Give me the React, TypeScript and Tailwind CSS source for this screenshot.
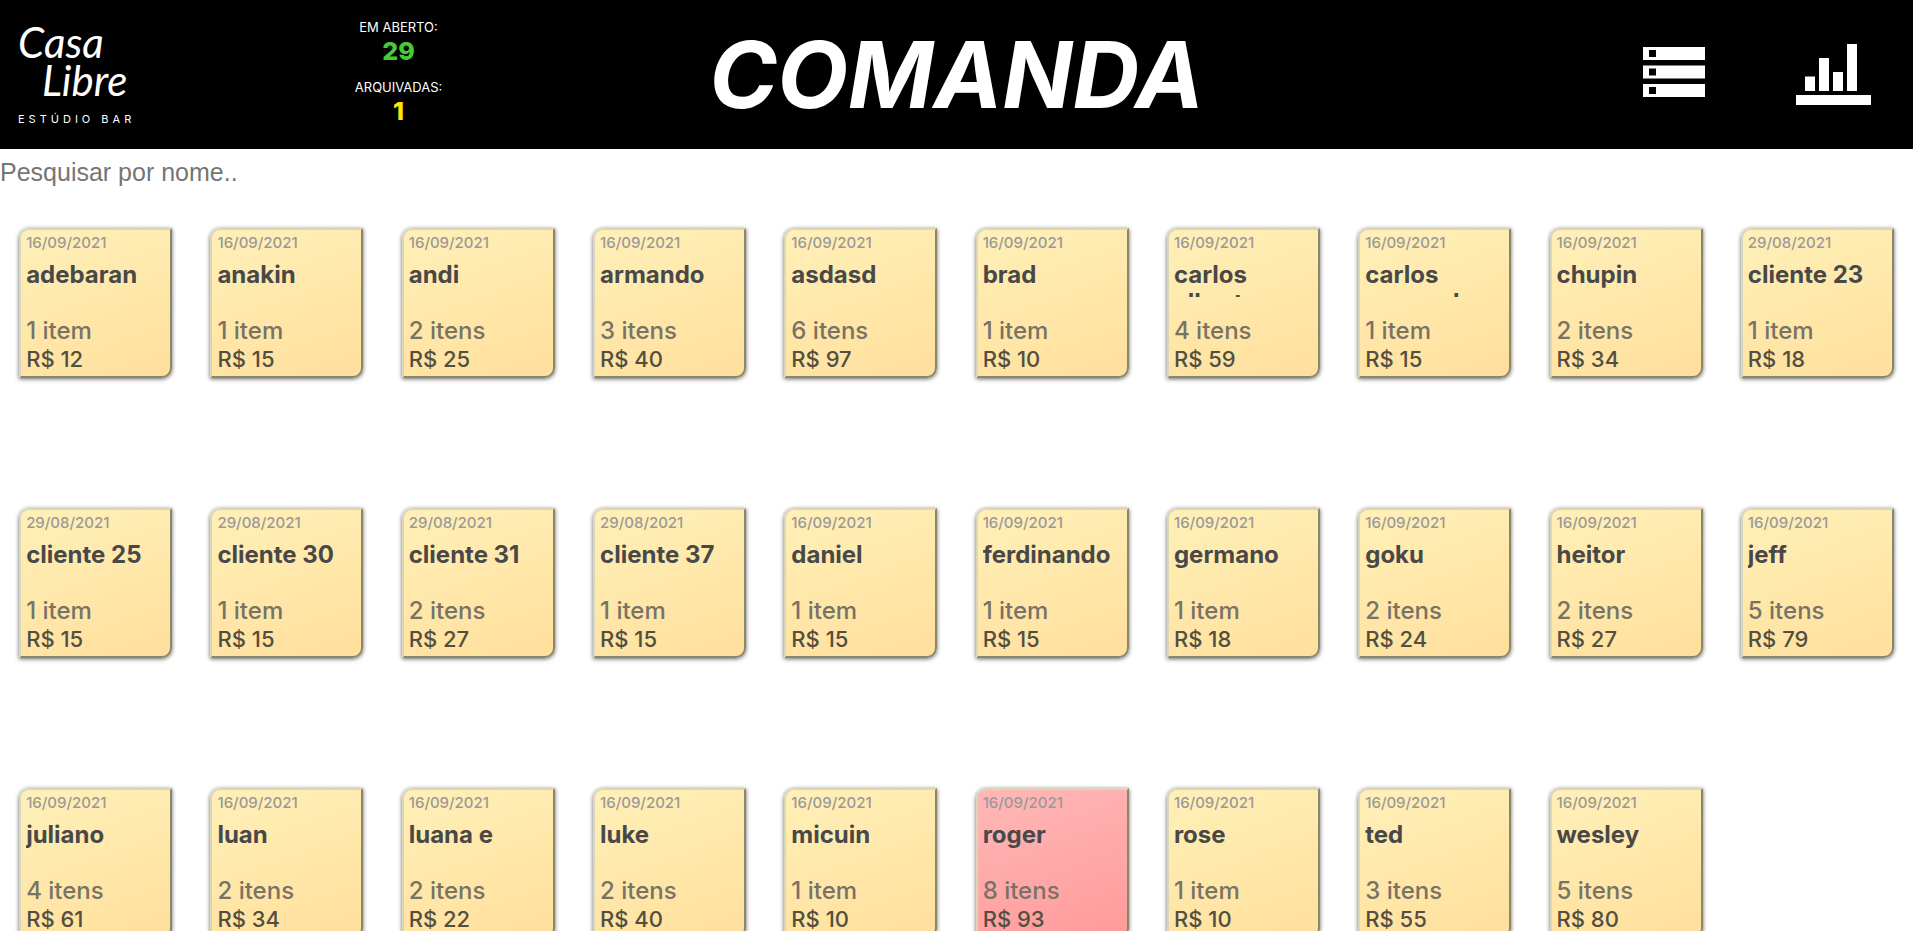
import React from "react";

type Comanda = { name: string; date: string; items: number; total: number; late?: boolean };

const D1 = "16/09/2021";
const D2 = "29/08/2021";

const comandas: Comanda[] = [
  { name: "adebaran", date: D1, items: 1, total: 12 },
  { name: "anakin", date: D1, items: 1, total: 15 },
  { name: "andi", date: D1, items: 2, total: 25 },
  { name: "armando", date: D1, items: 3, total: 40 },
  { name: "asdasd", date: D1, items: 6, total: 97 },
  { name: "brad", date: D1, items: 1, total: 10 },
  { name: "carlos alberto", date: D1, items: 4, total: 59 },
  { name: "carlos caramelo", date: D1, items: 1, total: 15 },
  { name: "chupin", date: D1, items: 2, total: 34 },
  { name: "cliente 23", date: D2, items: 1, total: 18 },
  { name: "cliente 25", date: D2, items: 1, total: 15 },
  { name: "cliente 30", date: D2, items: 1, total: 15 },
  { name: "cliente 31", date: D2, items: 2, total: 27 },
  { name: "cliente 37", date: D2, items: 1, total: 15 },
  { name: "daniel", date: D1, items: 1, total: 15 },
  { name: "ferdinando", date: D1, items: 1, total: 15 },
  { name: "germano", date: D1, items: 1, total: 18 },
  { name: "goku", date: D1, items: 2, total: 24 },
  { name: "heitor", date: D1, items: 2, total: 27 },
  { name: "jeff", date: D1, items: 5, total: 79 },
  { name: "juliano", date: D1, items: 4, total: 61 },
  { name: "luan", date: D1, items: 2, total: 34 },
  { name: "luana e", date: D1, items: 2, total: 22 },
  { name: "luke", date: D1, items: 2, total: 40 },
  { name: "micuin", date: D1, items: 1, total: 10 },
  { name: "roger", date: D1, items: 8, total: 93, late: true },
  { name: "rose", date: D1, items: 1, total: 10 },
  { name: "ted", date: D1, items: 3, total: 55 },
  { name: "wesley", date: D1, items: 5, total: 80 },
];

function Logo() {
  return (
    <a href="#" className="flex flex-col pl-[18px] text-white">
      <span className="font-['Lato',sans-serif] text-[42px] leading-[38px] italic">Casa</span>
      <span className="pl-6 font-['Lato',sans-serif] text-[42px] leading-[38px] italic">Libre</span>
      <span className="mt-3 text-[11px] leading-4 tracking-[4px] whitespace-nowrap">ESTÚDIO BAR</span>
    </a>
  );
}

function Counter({ label, value, color }: { label: string; value: number; color: string }) {
  return (
    <div className="flex flex-col items-center">
      <span className="text-[13px] leading-4 whitespace-nowrap text-white">{label}</span>
      <span className={`text-[25px] leading-8 font-extrabold ${color}`}>{value}</span>
    </div>
  );
}

function ListIcon() {
  return (
    <svg width="62" height="50" viewBox="0 0 62 50" fill="#fff" aria-hidden="true">
      <path fillRule="evenodd" d="M0 0h62v13H0zM6 3v7h7V3z" />
      <path fillRule="evenodd" d="M0 18.5h62v13H0zM6 21.5v7h7v-7z" />
      <path fillRule="evenodd" d="M0 37h62v13H0zM6 40v7h7v-7z" />
    </svg>
  );
}

function ChartIcon() {
  return (
    <svg width="75" height="61" viewBox="0 0 75 61" fill="#fff" aria-hidden="true">
      <path d="M9 32.5h10V47H9zM23 14h10v33H23zM37 28h10v19H37zM51 0h10v47H51zM0 51h75v10H0z" />
    </svg>
  );
}

function Card({ name, date, items, total, late }: Comanda) {
  return (
    <button
      type="button"
      className={`flex w-full flex-col items-start overflow-hidden rounded-tl-[10px] rounded-br-[10px] border-2 border-t-[#d9d6b9] border-r-[#8b8668] border-b-[#8b8668] border-l-[#d9d6b9] px-[5px] text-left shadow-[0_1px_4px_rgba(0,0,0,0.6)] ${
        late ? "bg-linear-160 from-[#ffb8b8] to-[#ff9a9a]" : "bg-linear-160 from-[#fff0b8] to-[#ffdf9c]"
      }`}
    >
      <span className="mt-[3px] text-[15px] leading-5 font-medium text-[#999]">{date}</span>
      <span className="mt-2 h-9 w-full overflow-hidden text-[24px] leading-7 font-bold text-[#484848]">{name}</span>
      <span className="mt-5 text-[24px] leading-7 font-medium text-[#777366]">
        {items} {items === 1 ? "item" : "itens"}
      </span>
      <span className="mb-[3px] text-[22px] leading-7 font-medium text-[#524e40]">R$ {total}</span>
    </button>
  );
}

export default function App() {
  return (
    <div className="h-screen overflow-hidden bg-white font-['Inter',sans-serif]">
      <header className="grid h-[149px] grid-cols-12 items-center bg-black">
        <Logo />
        <div className="col-start-3 flex flex-col gap-3 pb-1">
          <Counter label="EM ABERTO:" value={29} color="text-[#44cc33]" />
          <Counter label="ARQUIVADAS:" value={1} color="text-[#ffe600]" />
        </div>
        <h1 className="col-span-4 col-start-5 text-center text-[92px] leading-none font-bold text-white italic">
          COMANDA
        </h1>
        <button type="button" aria-label="Listar comandas" className="col-start-11 flex justify-center pb-1.5">
          <ListIcon />
        </button>
        <button type="button" aria-label="Estatísticas" className="col-start-12 flex justify-center">
          <ChartIcon />
        </button>
      </header>
      <input
        type="search"
        aria-label="Pesquisar por nome"
        placeholder="Pesquisar por nome.."
        className="block h-[46px] w-full font-['Liberation_Sans',Arial,sans-serif] text-[25px] text-black outline-none placeholder:text-[#757575]"
      />
      <main className="grid grid-cols-10 gap-y-[130px] pt-[33px]">
        {comandas.map((c) => (
          <div key={c.name} className="px-[10%]">
            <Card {...c} />
          </div>
        ))}
      </main>
    </div>
  );
}
